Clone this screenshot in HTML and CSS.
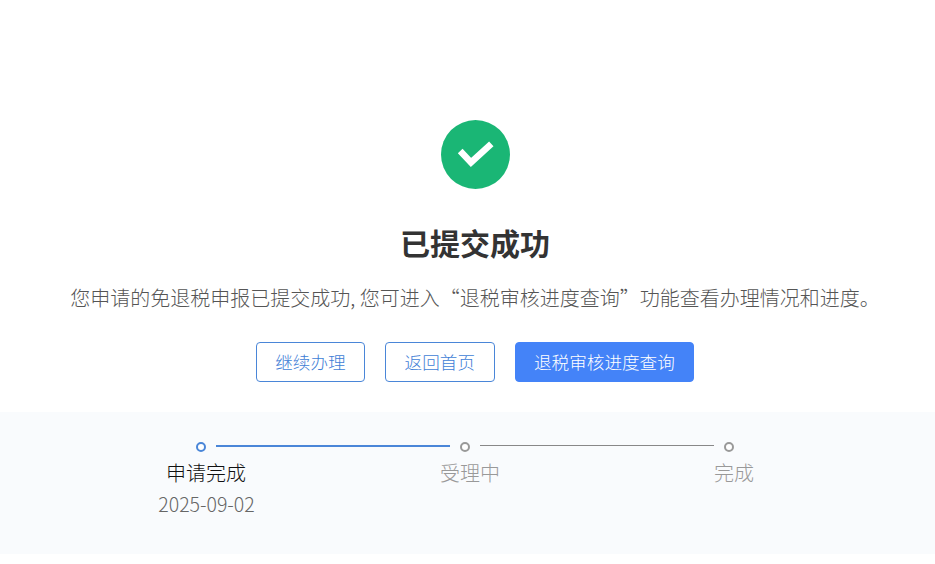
FILE: index.html
```html
<!DOCTYPE html>
<html lang="zh-CN">
<head>
<meta charset="utf-8">
<title>已提交成功</title>
<link rel="stylesheet" href="styles.css">
</head>
<body>
<main class="page">
  <section class="result">
    <svg class="result-icon" width="69" height="69" viewBox="0 0 69 69" aria-hidden="true">
      <circle cx="34.5" cy="34.5" r="34.5" fill="#1ab675"/>
      <path d="M19.2 31 L30 42.5 L50.3 23.8" fill="none" stroke="#fff" stroke-width="6.5"/>
    </svg>
    <h1 class="result-title">已提交成功</h1>
    <p class="result-desc">您申请的免退税申报已提交成功, 您可进入“退税审核进度查询”功能查看办理情况和进度。</p>
    <div class="actions">
      <a class="btn btn-outline">继续办理</a>
      <a class="btn btn-outline">返回首页</a>
      <a class="btn btn-primary">退税审核进度查询</a>
    </div>
  </section>
  <section class="progress">
    <div class="step step-done">
      <div class="step-head"><span class="dot"></span><span class="line"></span></div>
      <div class="step-label">申请完成</div>
      <div class="step-date">2025-09-02</div>
    </div>
    <div class="step">
      <div class="step-head"><span class="dot"></span><span class="line"></span></div>
      <div class="step-label">受理中</div>
    </div>
    <div class="step">
      <div class="step-head"><span class="dot"></span></div>
      <div class="step-label">完成</div>
    </div>
  </section>
</main>
</body>
</html>
```
FILE: styles.css
```css
* { box-sizing: border-box; }
html, body { margin: 0; padding: 0; background: #fff; }
body {
  width: 935px;
  height: 564px;
  overflow: hidden;
  font-family: "Noto Sans CJK SC", "Liberation Sans", sans-serif;
  font-weight: 300;
}
.result {
  height: 412px;
  padding: 120px 0 0 15px;
  display: flex;
  flex-direction: column;
  align-items: center;
}
.result-icon { display: block; }
.result-title {
  margin: 35px 0 0;
  font-size: 30px;
  line-height: 36px;
  font-weight: 700;
  color: #333;
}
.result-desc {
  margin: 24px 0 0;
  font-size: 20px;
  line-height: 28px;
  color: #555;
  white-space: nowrap;
}
.actions {
  margin-top: 30px;
  display: flex;
  gap: 20px;
}
.btn {
  height: 40px;
  padding: 0 18.5px 2px;
  display: flex;
  align-items: center;
  font-size: 17.6px;
  border-radius: 4px;
  border: 1px solid #4a86d8;
}
.btn-outline { color: #3f7ed6; background: #fff; }
.btn-primary { color: #fff; background: #4483f8; border-color: #4483f8; }
.progress {
  height: 142px;
  background: #f9fbfd;
  padding: 30px 0 0 75px;
  display: flex;
}
.step {
  width: 264px;
  display: flex;
  flex-direction: column;
  align-items: center;
}
.step-head {
  position: relative;
  width: 264px;
  height: 10px;
  padding-left: 121px;
  display: flex;
}
.dot {
  width: 10px;
  height: 10px;
  border-radius: 50%;
  border: 2px solid #999;
  background: #fff;
}
.line {
  position: absolute;
  left: 141px;
  top: 3px;
  width: 234px;
  height: 1px;
  background: #888;
}
.step-label {
  margin: 5px 2px 0 0;
  font-size: 20px;
  line-height: 32px;
  color: #999;
}
.step-date {
  margin: 1px 1px 0 0;
  font-size: 19.5px;
  line-height: 28px;
  color: #666;
}
.step-done .dot { border-color: #4a86d8; }
.step-done .line { height: 2px; background: #4a86d8; }
.step-done .step-label { color: #111; }
```
